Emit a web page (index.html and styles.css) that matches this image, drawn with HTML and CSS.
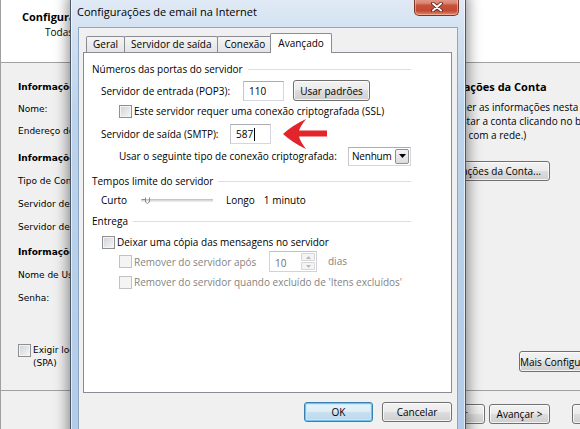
FILE: index.html
```html
<!DOCTYPE html>
<html lang="pt-BR">
<head>
  <meta charset="UTF-8">
  <title>Configurações de email na Internet</title>
  <link rel="stylesheet" href="styles.css">
</head>
<body>
  <div class="wizard">
    <header class="wiz-head">
      <h1>Configurações de Conta POP e IMAP</h1>
      <p>Todas estas configurações são necessárias para que a sua conta funcione.</p>
    </header>

    <div class="wiz-body">
      <div class="wiz-left">
        <div class="wiz-sec short">
          <div class="wiz-title">Informações do Usuário</div>
          <div class="wiz-row">Nome:</div>
          <div class="wiz-row">Endereço de Email:</div>
        </div>
        <div class="wiz-sec sec-server">
          <div class="wiz-title">Informações do Servidor</div>
          <div class="wiz-row">Tipo de Conta:</div>
          <div class="wiz-row">Servidor de entrada de emails:</div>
          <div class="wiz-row">Servidor de saída de emails (SMTP):</div>
        </div>
        <div class="wiz-sec sec-logon">
          <div class="wiz-title">Informações de Logon</div>
          <div class="wiz-row">Nome de Usuário:</div>
          <div class="wiz-row">Senha:</div>
        </div>
        <div class="wiz-check">
          <span class="check"></span>
          <span>Exigir logon usando Autenticação de Senha de Segurança<br>(SPA)</span>
        </div>
      </div>

      <div class="wiz-right">
        <div class="wiz-heading">Testar Configurações da Conta</div>
        <p class="wiz-text">Depois de preencher as informações nesta<br>tela, sugerimos testar a conta clicando no botão abaixo.<br>(Requer a conexão com a rede.)</p>
        <div class="wiz-test">
          <button class="btn">Testar Configurações da Conta...</button>
        </div>
        <div class="wiz-more">
          <button class="btn btn-more">Mais Configurações...</button>
        </div>
      </div>
    </div>

    <footer class="wiz-foot">
      <button class="btn btn-back">&lt; Voltar</button>
      <button class="btn btn-next">Avançar &gt;</button>
      <button class="btn btn-cancel">Cancelar</button>
    </footer>
  </div>

  <div class="dialog">
    <div class="dlg-title">Configurações de email na Internet</div>
    <div class="dlg-close">
      <svg width="12" height="10" viewBox="0 0 12 10">
        <path d="M2 1.5 L10 8.5 M10 1.5 L2 8.5" stroke="#5a1c12" stroke-width="3.6" stroke-linecap="round"/>
        <path d="M2 1.5 L10 8.5 M10 1.5 L2 8.5" stroke="#fff" stroke-width="2" stroke-linecap="round"/>
      </svg>
    </div>

    <div class="dlg-client">
      <div class="tabs">
        <div class="tab">Geral</div>
        <div class="tab">Servidor de saída</div>
        <div class="tab">Conexão</div>
        <div class="tab active">Avançado</div>
      </div>

      <div class="tab-panel">
        <div class="group">Números das portas do servidor</div>

        <div class="row row-pop">
          <span class="lbl lbl-pop">Servidor de entrada (POP3):</span>
          <span class="field port">110</span>
          <button class="btn btn-defaults">Usar padrões</button>
        </div>

        <div class="row row-ssl">
          <span class="check"></span>
          <span>Este servidor requer uma conexão criptografada (SSL)</span>
        </div>

        <div class="row row-smtp">
          <span class="lbl lbl-smtp">Servidor de saída (SMTP):</span>
          <span class="field port">587<span class="caret"></span></span>
        </div>

        <div class="row row-enc">
          <span class="lbl lbl-enc">Usar o seguinte tipo de conexão criptografada:</span>
          <span class="combo">
            <span class="combo-value">Nenhum</span>
            <span class="combo-btn">
              <svg width="7" height="4" viewBox="0 0 7 4"><path d="M0 0 H7 L3.5 4 Z" fill="#000"/></svg>
            </span>
          </span>
        </div>

        <div class="group group-time">Tempos limite do servidor</div>

        <div class="row row-slider">
          <span class="lbl lbl-short">Curto</span>
          <span class="slider">
            <svg class="thumb" width="8" height="8" viewBox="0 0 8 8">
              <path d="M0 2.5 H3 M3.5 0.5 V5 L5.5 6.5 L7.5 5 V0.5" fill="none" stroke="#8a8a8a" stroke-width="1"/>
            </svg>
          </span>
          <span class="lbl-long">Longo</span>
          <span class="timeout">1 minuto</span>
        </div>

        <div class="group group-delivery">Entrega</div>

        <div class="row row-keep">
          <span class="check"></span>
          <span>Deixar uma cópia das mensagens no servidor</span>
        </div>

        <div class="row row-after disabled">
          <span class="check"></span>
          <span class="lbl lbl-after">Remover do servidor após</span>
          <span class="spin">
            <span class="spin-value">10</span>
            <span class="spin-btns">
              <span class="spin-up"><svg width="5" height="3" viewBox="0 0 5 3"><path d="M0 3 L2.5 0 L5 3 Z" fill="#b8b8b8"/></svg></span>
              <span class="spin-down"><svg width="5" height="3" viewBox="0 0 5 3"><path d="M0 0 H5 L2.5 3 Z" fill="#b8b8b8"/></svg></span>
            </span>
          </span>
          <span class="days">dias</span>
        </div>

        <div class="row row-deleted disabled">
          <span class="check"></span>
          <span>Remover do servidor quando excluído de 'Itens excluídos'</span>
        </div>

        <svg class="arrow" width="44" height="30" viewBox="0 0 44 30">
          <path d="M0 15 Q10 6 23 0 Q17 8 16 11.5 L44 11.5 L44 17.5 L16 17.5 Q17 22 23 30 Q10 24 0 15 Z" fill="#e3242b"/>
        </svg>
      </div>

      <div class="dlg-buttons">
        <button class="btn btn-ok">OK</button>
        <button class="btn btn-dlg-cancel">Cancelar</button>
      </div>
    </div>
  </div>
</body>
</html>
```

FILE: styles.css
```css
* {
  box-sizing: border-box;
}

body {
  margin: 0;
  width: 580px;
  height: 429px;
  overflow: hidden;
  position: relative;
  background: #f0f0f0;
  color: #000;
  font-family: "Open Sans", sans-serif;
  font-size: 10px;
}

/* ---- wizard window in the background ---- */

.wizard {
  width: 700px;
  height: 429px;
  border-left: 1px solid #a0a0a0;
  display: flex;
  flex-direction: column;
}

.wiz-head {
  height: 63px;
  flex-shrink: 0;
  background: #fff;
  border-bottom: 1px solid #a0a0a0;
  padding: 9px 0 0 21px;
}

.wiz-head h1 {
  margin: 0;
  font-size: 11px;
  font-weight: 700;
  line-height: 16px;
}

.wiz-head p {
  margin: 0 0 0 23px;
  line-height: 14px;
}

.wiz-body {
  height: 327px;
  flex-shrink: 0;
  display: grid;
  grid-template-columns: 69px 1fr;
}

.wiz-left {
  padding: 13px 0 0 17px;
  font-family: "DejaVu Sans", sans-serif;
  font-size: 9px;
  white-space: nowrap;
}

.wiz-title,
.wiz-row {
  height: 23px;
  line-height: 23px;
}

.wiz-title {
  font-weight: 700;
}

.wiz-sec.short .wiz-title,
.wiz-sec.short .wiz-row {
  height: 22px;
  line-height: 22px;
}

.sec-server {
  margin-top: 5px;
}

.sec-logon {
  margin-top: 2px;
}

.wiz-check {
  display: flex;
  gap: 2px;
  margin-top: 34px;
  line-height: 13px;
}

.wiz-right {
  padding: 13px 0 0 309px;
  white-space: nowrap;
}

.wiz-heading {
  height: 22px;
  line-height: 22px;
  font-size: 11px;
  font-weight: 700;
}

.wiz-text {
  margin: 2px 0 0;
  line-height: 14px;
}

.wiz-test {
  width: 171px;
  display: flex;
  justify-content: flex-end;
  margin-top: 19px;
}

.wiz-test .btn {
  height: 20px;
  padding: 0 8px;
}

.wiz-more {
  margin-top: 170px;
  padding-left: 140px;
}

.btn-more {
  height: 21px;
  padding: 0 8px;
}

.wiz-foot {
  flex: 1;
  border-top: 1px solid #a0a0a0;
  padding: 13px 0 0 413px;
  display: flex;
  align-items: flex-start;
}

.wiz-foot .btn {
  height: 20px;
}

.btn-back {
  width: 71px;
}

.btn-next {
  width: 61px;
  margin-left: 4px;
}

.btn-cancel {
  width: 75px;
  margin-left: 22px;
}

/* ---- shared controls ---- */

.btn {
  font-family: "Open Sans", sans-serif;
  font-size: 10px;
  color: #000;
  border: 1px solid #707070;
  border-radius: 3px;
  background: linear-gradient(#f2f2f2 0%, #ebebeb 49%, #dddddd 50%, #cfcfcf 100%);
  box-shadow: inset 0 0 0 1px rgba(255, 255, 255, 0.75);
  padding: 0;
  white-space: nowrap;
}

.check {
  width: 13px;
  height: 13px;
  flex-shrink: 0;
  border: 1px solid #8e8f8f;
  background: linear-gradient(135deg, #cdd1d7, #f7f7f7);
  box-shadow: inset 0 0 0 1px #f4f4f4;
}

.field {
  display: flex;
  align-items: center;
  background: #fff;
  border: 1px solid #d4d8de;
  border-top-color: #abadb3;
  border-left-color: #c3c7cd;
  padding-left: 5px;
}

/* ---- dialog window ---- */

.dialog {
  position: absolute;
  left: 70px;
  top: -6px;
  width: 396px;
  height: 450px;
  border: 1px solid #4b5868;
  border-radius: 6px 6px 0 0;
  background: linear-gradient(#e2ebf6 0, #d3e1f1 36px, #bdd3eb 120px, #b2cbe8 100%);
  box-shadow: 0 0 14px 2px rgba(0, 0, 0, 0.45), inset 0 0 0 1px rgba(255, 255, 255, 0.6);
  padding: 0 7px 7px;
}

.dlg-title {
  height: 32px;
  padding-top: 9px;
  line-height: 16px;
  font-size: 11px;
  margin-left: -1px;
}

.dlg-close {
  position: absolute;
  top: 0;
  right: 6px;
  width: 45px;
  height: 21px;
  border: 1px solid #7e3327;
  border-top: none;
  border-radius: 0 0 5px 5px;
  background: linear-gradient(#eab0a3 0%, #dc8673 40%, #c9503a 52%, #c24a33 78%, #df8a6b 100%);
  box-shadow: inset 0 0 0 1px rgba(255, 210, 200, 0.5);
  display: flex;
  align-items: center;
  justify-content: center;
  padding-top: 3px;
}

.dlg-client {
  height: 410px;
  background: #f0f0f0;
  border: 1px solid #8ea6c2;
  padding: 5px 5px 0 4px;
}

.tabs {
  display: flex;
  align-items: flex-end;
  height: 20px;
  padding-left: 3px;
  position: relative;
  z-index: 1;
}

.tab {
  height: 16px;
  margin-bottom: 1px;
  margin-right: -1px;
  padding: 0 6px;
  line-height: 14px;
  border: 1px solid #898c95;
  border-bottom: none;
  border-radius: 2px 2px 0 0;
  background: linear-gradient(#f5f5f5, #e4e4e4);
  white-space: nowrap;
}

.tab.active {
  height: 20px;
  margin: 0 -2px 0 -1px;
  padding: 1px 7px 0;
  line-height: 16px;
  background: #fff;
}

.tab-panel {
  position: relative;
  height: 341px;
  margin-top: -1px;
  background: #fff;
  border: 1px solid #898c95;
  padding: 8px 40px 0 8px;
}

.group {
  display: flex;
  align-items: center;
  gap: 5px;
  height: 16px;
  white-space: nowrap;
}

.group::after {
  content: "";
  flex: 1;
  border-top: 1px solid #d5dfe5;
  margin-top: 1px;
}

.row {
  display: flex;
  align-items: center;
  white-space: nowrap;
}

.lbl {
  flex-shrink: 0;
}

.row-pop {
  height: 21px;
  margin-top: 3px;
  padding-left: 9px;
}

.lbl-pop {
  width: 142px;
}

.port {
  width: 41px;
  height: 20px;
}

.btn-defaults {
  width: 77px;
  height: 21px;
  margin-left: 9px;
}

.row-ssl {
  height: 16px;
  margin-top: 2px;
  padding-left: 27px;
  gap: 2px;
}

.row-smtp {
  height: 20px;
  margin-top: 5px;
  padding-left: 9px;
}

.lbl-smtp {
  width: 129px;
}

.caret {
  width: 1px;
  height: 13px;
  background: #000;
  margin-left: 1px;
}

.row-enc {
  height: 20px;
  margin-top: 2px;
  padding-left: 27px;
}

.lbl-enc {
  width: 229px;
}

.combo {
  display: flex;
  align-items: center;
  width: 66px;
  height: 19px;
  background: #fff;
  border: 1px solid #abadb3;
  border-color: #abadb3 #d4d8de #d4d8de #c3c7cd;
  padding: 1px;
}

.combo-value {
  flex: 1;
  padding-left: 2px;
  letter-spacing: -0.2px;
}

.combo-btn {
  width: 14px;
  height: 15px;
  display: flex;
  align-items: center;
  justify-content: center;
  border: 1px solid #8f8f8f;
  border-radius: 2px;
  background: linear-gradient(#f3f3f3, #dcdcdc);
}

.group-time {
  margin-top: 7px;
}

.row-slider {
  height: 16px;
  margin-top: 3px;
  padding-left: 9px;
}

.lbl-short {
  width: 40px;
}

.slider {
  position: relative;
  width: 72px;
  height: 3px;
  border-top: 1px solid #c4c4c4;
  border-bottom: 1px solid #e9e9e9;
  background: #dadada;
}

.slider .thumb {
  position: absolute;
  left: 1px;
  top: -3px;
}

.lbl-long {
  margin-left: 13px;
}

.timeout {
  margin-left: 9px;
}

.group-delivery {
  margin-top: 5px;
}

.row-keep {
  height: 16px;
  margin-top: 5px;
  padding-left: 10px;
  gap: 2px;
}

.row-after {
  height: 21px;
  margin-top: 1px;
  padding-left: 27px;
}

.row-after .check {
  margin-right: 2px;
}

.lbl-after {
  width: 135px;
}

.disabled {
  color: #838383;
}

.disabled .check {
  border-color: #c2c2c2;
  background: #f4f4f4;
  box-shadow: none;
}

.spin {
  display: flex;
  width: 48px;
  height: 21px;
  border: 1px solid #d0d3d8;
  border-top-color: #bfc2c7;
  background: #fff;
}

.spin-value {
  flex: 1;
  padding: 4px 0 0 5px;
  color: #6d6d6d;
}

.spin-btns {
  width: 15px;
  display: flex;
  flex-direction: column;
  padding: 1px 1px 1px 0;
  gap: 1px;
}

.spin-up,
.spin-down {
  flex: 1;
  display: flex;
  align-items: center;
  justify-content: center;
  border: 1px solid #d6d6d6;
  border-radius: 1px;
  background: #f4f4f4;
}

.days {
  margin-left: 11px;
  margin-top: -2px;
}

.row-deleted {
  height: 16px;
  margin-top: 2px;
  padding-left: 27px;
  gap: 2px;
}

/* red annotation arrow drawn over the tab page */
.arrow {
  position: absolute;
  left: 199px;
  top: 66px;
}

.dlg-buttons {
  display: flex;
  justify-content: flex-end;
  gap: 9px;
  padding-top: 9px;
}

.dlg-buttons .btn {
  height: 20px;
}

.btn-ok {
  width: 69px;
  border-color: #3c7fb1;
  background: linear-gradient(#e8f4fb 0%, #dcecf6 49%, #c8e0f0 50%, #bcd7ea 100%);
  box-shadow: inset 0 0 0 1px #6fc2ee, inset 0 0 0 2px rgba(200, 235, 252, 0.8);
}

.btn-dlg-cancel {
  width: 70px;
}
```
